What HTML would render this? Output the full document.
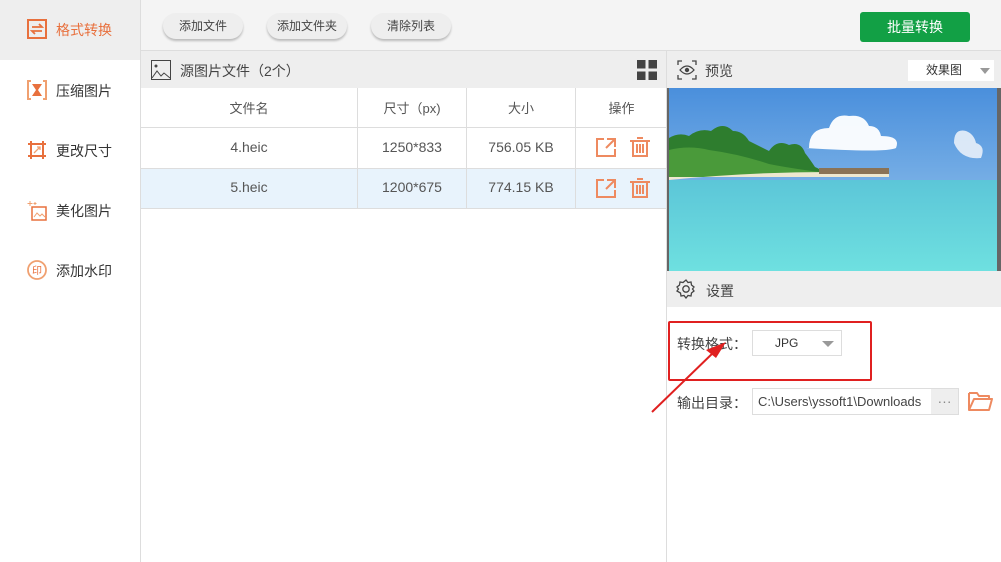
<!DOCTYPE html>
<html><head><meta charset="utf-8"><style>
*{margin:0;padding:0;box-sizing:border-box}
body{width:1001px;height:562px;overflow:hidden;background:#fff;font-family:"Liberation Sans","Noto Sans CJK SC",sans-serif;font-size:13px;color:#333;position:relative}
.a{position:absolute}
.side{left:0;top:0;width:141px;height:562px;background:#fff;border-right:1px solid #ddd}
.it{position:absolute;left:0;width:140px;height:60px;font-size:14px;color:#333}
.it span{position:absolute;left:56px;top:20px}
.it svg{position:absolute;left:27px;top:19px}
.btn{top:13px;height:26px;border-radius:13px;background:#eee;box-shadow:0 2px 2px #bbb;font-size:12px;color:#444;text-align:center;line-height:26px}
.cell{position:absolute;text-align:center;font-size:13px;color:#555}
</style></head><body>
<div class="a side">
 <div class="it" style="top:0;background:#eeeeee;color:#e8703d"><svg width="20" height="20" viewBox="0 0 20 20"><rect x="1" y="1" width="18" height="18" fill="none" stroke="#e8703d" stroke-width="2"/><path d="M5 8h10l-3-3M15 12H5l3 3" fill="none" stroke="#e8703d" stroke-width="1.8"/></svg><span>格式转换</span></div>
 <div class="it" style="top:61px"><svg width="20" height="20" viewBox="0 0 20 20"><path d="M4 1H1v18h3M16 1h3v18h-3" fill="none" stroke="#f0a070" stroke-width="2"/><path d="M5 4h10l-4 6 4 6H5l4-6z" fill="#e8703d"/></svg><span>压缩图片</span></div>
 <div class="it" style="top:121px"><svg width="20" height="20" viewBox="0 0 20 20"><path d="M1 4h18M1 16h18M4 1v18M16 1v18" stroke="#e8703d" stroke-width="2"/><path d="M7 13l6-6M10 7h3v3" fill="none" stroke="#f0a070" stroke-width="1.3"/></svg><span>更改尺寸</span></div>
 <div class="it" style="top:181px"><svg width="20" height="22" viewBox="0 0 20 22"><rect x="5" y="7" width="14" height="13" fill="none" stroke="#e8703d" stroke-width="1.5"/><path d="M7 17l3-4 3 3 2-2 3 3" fill="none" stroke="#f0a070"/><path d="M3 1v5M0.5 3.5h5M8 2v3M6.5 3.5h3" stroke="#f0a070"/></svg><span>美化图片</span></div>
 <div class="it" style="top:241px"><svg width="20" height="20" viewBox="0 0 20 20"><circle cx="10" cy="10" r="9" fill="none" stroke="#f0a070" stroke-width="1.8"/><text x="10" y="14" font-size="10" text-anchor="middle" fill="#e8703d" font-family="Noto Sans CJK SC">印</text></svg><span>添加水印</span></div>
</div>
<div class="a" style="left:141px;top:0;width:860px;height:51px;background:#f4f4f4;border-bottom:1px solid #ddd"></div>
<div class="a btn" style="left:163px;width:80px">添加文件</div>
<div class="a btn" style="left:267px;width:80px">添加文件夹</div>
<div class="a btn" style="left:371px;width:80px">清除列表</div>
<div class="a" style="left:860px;top:12px;width:110px;height:30px;background:#12a045;border-radius:3px;color:#fff;font-size:14px;text-align:center;line-height:30px">批量转换</div>
<div class="a" style="left:141px;top:51px;width:526px;height:37px;background:#eeeeee"></div>
<svg class="a" style="left:151px;top:60px" width="20" height="20" viewBox="0 0 20 20"><rect x="0.5" y="0.5" width="19" height="19" fill="none" stroke="#444"/><circle cx="5" cy="6" r="1.5" fill="#444"/><path d="M1 18l5-7 4 5 3-3 6 5" fill="none" stroke="#444"/></svg>
<div class="a" style="left:180px;top:61px;font-size:14px;color:#444">源图片文件（2个）</div>
<svg class="a" style="left:637px;top:60px" width="20" height="20"><rect x="0" y="0" width="8.5" height="8.5" fill="#444"/><rect x="11.5" y="0" width="8.5" height="8.5" fill="#444"/><rect x="0" y="11.5" width="8.5" height="8.5" fill="#444"/><rect x="11.5" y="11.5" width="8.5" height="8.5" fill="#444"/></svg>
<div class="a" style="left:141px;top:88px;width:526px;height:122px">
 <div class="a" style="left:0;top:39px;width:526px;border-top:1px solid #ddd"></div>
 <div class="a" style="left:0;top:80px;width:526px;height:41px;background:#e8f3fc;border-top:1px solid #ddd;border-bottom:1px solid #ddd"></div>
 <div class="a" style="left:216px;top:0;height:121px;border-left:1px solid #ddd"></div>
 <div class="a" style="left:325px;top:0;height:121px;border-left:1px solid #ddd"></div>
 <div class="a" style="left:434px;top:0;height:121px;border-left:1px solid #ddd"></div>
 <div class="cell" style="left:0;width:216px;top:10px">文件名</div>
 <div class="cell" style="left:217px;width:108px;top:10px">尺寸（px)</div>
 <div class="cell" style="left:326px;width:108px;top:10px">大小</div>
 <div class="cell" style="left:435px;width:91px;top:10px">操作</div>
 <div class="cell" style="left:0;width:216px;top:51px;font-size:14px">4.heic</div>
 <div class="cell" style="left:217px;width:108px;top:51px;font-size:14px">1250*833</div>
 <div class="cell" style="left:326px;width:108px;top:51px;font-size:14px">756.05 KB</div>
 <div class="cell" style="left:0;width:216px;top:91px;font-size:14px">5.heic</div>
 <div class="cell" style="left:217px;width:108px;top:91px;font-size:14px">1200*675</div>
 <div class="cell" style="left:326px;width:108px;top:91px;font-size:14px">774.15 KB</div>
</div>
<svg class="a" style="left:596px;top:137px" width="60" height="20"><g fill="none" stroke="#ee8a60" stroke-width="2"><path d="M8 2H1v17h18v-7M11 2h8v8M19 2l-9 9"/><path d="M34 4h20M37 4v15h14V4M41 1h6M41 7v9M44 7v9M47 7v9"/></g></svg>
<svg class="a" style="left:596px;top:178px" width="60" height="20"><g fill="none" stroke="#ee8a60" stroke-width="2"><path d="M8 2H1v17h18v-7M11 2h8v8M19 2l-9 9"/><path d="M34 4h20M37 4v15h14V4M41 1h6M41 7v9M44 7v9M47 7v9"/></g></svg>
<div class="a" style="left:666px;top:51px;width:1px;height:511px;background:#ddd"></div>
<div class="a" style="left:667px;top:51px;width:334px;height:37px;background:#eeeeee"></div>
<svg class="a" style="left:677px;top:60px" width="20" height="20" viewBox="0 0 20 20"><path d="M5 1H1v4M15 1h4v4M5 19H1v-4M15 19h4v-4" fill="none" stroke="#444" stroke-width="1.3"/><path d="M3 10q7-8 14 0q-7 8-14 0z" fill="none" stroke="#444" stroke-width="1.3"/><circle cx="10" cy="10" r="2.2" fill="#444"/></svg>
<div class="a" style="left:705px;top:61px;font-size:14px;color:#444">预览</div>
<div class="a" style="left:908px;top:60px;width:86px;height:21px;background:#fff;font-size:12px;line-height:21px;padding-left:18px">效果图<span style="position:absolute;right:4px;top:8px;border:5px solid transparent;border-top:6px solid #999;border-bottom:0"></span></div>
<div class="a" style="left:667px;top:88px;width:334px;height:183px;background:#666"></div>
<svg class="a" style="left:669px;top:88px" width="328" height="183" viewBox="0 0 328 183">
<defs><linearGradient id="s" x1="0" y1="0" x2="0" y2="1"><stop offset="0" stop-color="#4a8fdc"/><stop offset="1" stop-color="#9fcbee"/></linearGradient><linearGradient id="w" x1="0" y1="0" x2="0" y2="1"><stop offset="0" stop-color="#5cc6d8"/><stop offset="1" stop-color="#6ee0e0"/></linearGradient></defs>
<rect width="328" height="183" fill="url(#s)"/><rect y="92" width="328" height="91" fill="url(#w)"/>
<path d="M0 50q10-6 20-2q10-8 22-5q12-10 22 0q10 0 16 10q10 5 20 10q8-12 20-6q12-4 16 8q4 5 10 14q6 2 8 8H0z" fill="#2e7d2e"/>
<path d="M0 62q20-5 40 0q30 4 60 14q20 4 50 8v5H0z" fill="#4a9a3a"/>
<path d="M0 92q80-8 160-8l60 1v4H0z" fill="#eee8cf"/>
<path d="M150 80h70v6h-70z" fill="#8a7356"/>
<path d="M140 60q0-20 20-20q5-15 20-12q15-2 20 10q10 0 12 10q20 0 15 12q-10 5-90 0z" fill="#fff" opacity=".95"/>
<path d="M285 55q0-15 12-12q8 3 10 12q10 3 5 15q-20 2-27-15z" fill="#e8f0fa" opacity=".9"/>
</svg>
<div class="a" style="left:667px;top:271px;width:334px;height:36px;background:#eeeeee"></div>
<svg class="a" style="left:676px;top:279px" width="20" height="20" viewBox="0 0 20 20"><path d="M10 1l2 2.5 3-.5.5 3 2.5 2-1.5 2 1.5 2-2.5 2-.5 3-3-.5-2 2.5-2-2.5-3 .5-.5-3L1 12l1.5-2L1 8l2.5-2 .5-3 3 .5z" fill="none" stroke="#444" stroke-width="1.3"/><circle cx="10" cy="10" r="3.2" fill="none" stroke="#444" stroke-width="1.3"/></svg>
<div class="a" style="left:706px;top:281px;font-size:14px;color:#444">设置</div>
<div class="a" style="left:677px;top:334px;font-size:14px;color:#444">转换格式：</div>
<div class="a" style="left:752px;top:330px;width:90px;height:26px;border:1px solid #ddd;background:#fff;font-size:12px;line-height:24px;padding-left:22px">JPG<span style="position:absolute;right:7px;top:10px;border:6px solid transparent;border-top:6px solid #999;border-bottom:0"></span></div>
<div class="a" style="left:668px;top:321px;width:204px;height:60px;border:2px solid #e02020;border-radius:2px"></div>
<div class="a" style="left:677px;top:393px;font-size:14px;color:#444">输出目录：</div>
<div class="a" style="left:752px;top:388px;width:207px;height:27px;border:1px solid #ddd;background:#fff;font-size:13px;line-height:25px;padding-left:5px;color:#444">C:\Users\yssoft1\Downloads<span style="position:absolute;right:0;top:0;width:27px;height:25px;background:#eee;color:#888;text-align:center;line-height:24px;font-size:14px;letter-spacing:0">···</span></div>
<svg class="a" style="left:967px;top:390px" width="26" height="22" viewBox="0 0 26 22"><path d="M2 3h8l2 3h10v3M2 3v17h20l3-11H7L2 20" fill="none" stroke="#ee8a60" stroke-width="2" stroke-linejoin="round"/></svg>
<svg class="a" style="left:640px;top:330px" width="100" height="90"><path d="M12 82L76 20" stroke="#e02020" stroke-width="2"/><path d="M86 12L66 20L76 28z" fill="#e02020"/></svg>
</body></html>
